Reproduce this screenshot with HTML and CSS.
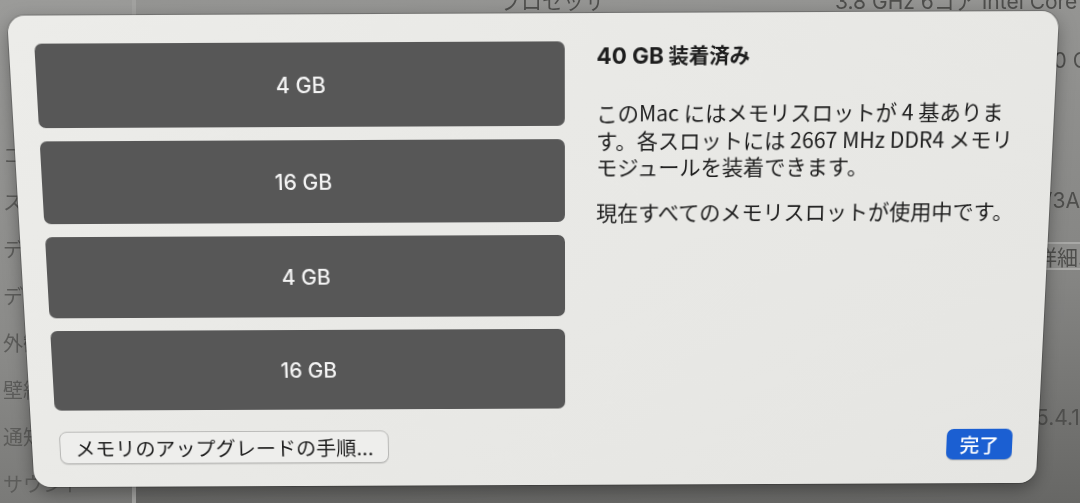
FILE: index.html
```html
<!DOCTYPE html>
<html lang="ja">
<head>
<meta charset="utf-8">
<title>メモリ</title>
<link rel="stylesheet" href="styles.css">
</head>
<body>
<div class="screen">
  <aside class="sidebar">
    <div class="side-item">コントロールセンター</div>
    <div class="side-item">スクリーンタイム</div>
    <div class="side-item">ディスプレイ</div>
    <div class="side-item">デスクトップとDock</div>
    <div class="side-item">外観</div>
    <div class="side-item">壁紙</div>
    <div class="side-item">通知</div>
    <div class="side-item">サウンド</div>
  </aside>
  <main class="info">
    <div class="info-row row-top"><span class="lbl">プロセッサ</span><span class="val">3.8 GHz 6コア Intel Core i5</span></div>
    <div class="info-row row-a"><span class="edge">40 GB 2667 MHz DDR4</span></div>
    <div class="info-row row-b"><span class="edge big">(</span></div>
    <div class="info-row row-c"><span class="edge">V3AB12CD</span></div>
    <div class="info-row row-d"><span class="edge detail">詳細...</span></div>
    <div class="info-row row-e"><span class="edge">5.4.1</span></div>
  </main>

  <section class="dialog">
    <div class="dialog-main">
      <div class="slots">
        <div class="slot">4 GB</div>
        <div class="slot">16 GB</div>
        <div class="slot">4 GB</div>
        <div class="slot">16 GB</div>
      </div>
      <div class="details">
        <h1 class="title"><span class="title-num">40 GB</span> 装着済み</h1>
        <p class="para">このMac にはメモリスロットが 4 基ありま<br>す。各スロットには 2667 MHz DDR4 メモリ<br>モジュールを装着できます。</p>
        <p class="para">現在すべてのメモリスロットが使用中です。</p>
      </div>
    </div>
    <div class="footer">
      <button class="btn btn-plain">メモリのアップグレードの手順...</button>
      <button class="btn btn-primary">完了</button>
    </div>
  </section>
</div>
</body>
</html>
```

FILE: styles.css
```css
html, body {
  margin: 0;
  padding: 0;
}

body {
  width: 1080px;
  height: 503px;
  overflow: hidden;
  background: #767674;
  font-family: Inter, "Noto Sans CJK JP", sans-serif;
}

.screen {
  position: relative;
  display: flex;
  width: 1080px;
  height: 503px;
  overflow: hidden;
}

/* ---------- backdrop window ---------- */
.sidebar {
  flex: none;
  width: 136px;
  background: linear-gradient(#9b9b99, #8a8a88 70%, #7a7a78);
  border-right: 4px solid #a2a2a0;
  display: flex;
  flex-direction: column;
  padding-top: 133px;
  box-sizing: border-box;
}

.side-item {
  height: 47px;
  line-height: 47px;
  padding-left: 3px;
  font-size: 20px;
  color: #5c5c5a;
  white-space: nowrap;
  filter: blur(0.5px);
}

.info {
  flex: 1;
  display: flex;
  flex-direction: column;
  background: linear-gradient(#959593, #858583 55%, #676765);
  color: #4e4e4c;
  font-size: 21px;
  white-space: nowrap;
  overflow: hidden;
}

.info-row {
  display: flex;
  align-items: center;
  filter: blur(0.5px);
}

.row-top {
  height: 20px;
  margin-top: -10px;
  padding-left: 364px;
}

.row-top .val {
  margin-left: 230px;
}

.row-a { height: 40px; margin-top: 30px; padding-left: 904px; }
.row-b { height: 40px; margin-top: 25px; padding-left: 906px; }
.row-c { height: 40px; margin-top: 35px; padding-left: 902px; }
.row-d {
  height: 24px;
  margin-top: 22px;
  padding-left: 900px;
  border-top: 2px solid #a8a8a6;
  border-bottom: 2px solid #a8a8a6;
  background: #8f8f8d;
}
.row-e { height: 40px; margin-top: 127px; padding-left: 900px; }

.big {
  font-size: 34px;
  font-weight: 300;
}

/* ---------- dialog ---------- */
.dialog {
  position: absolute;
  left: 21px;
  top: 18px;
  width: 1026px;
  height: 474px;
  box-sizing: border-box;
  padding: 27px 26px 24px 25px;
  display: flex;
  flex-direction: column;
  background: linear-gradient(135deg, #ecece9, #e5e5e2);
  border-radius: 17px;
  box-shadow: 0 0 0 1px rgba(0,0,0,0.18), 0 6px 18px rgba(0,0,0,0.35);
  transform: perspective(1000px) rotateX(-6deg) rotate(-0.25deg);
  color: #1d1d1d;
}

.dialog-main {
  display: flex;
  gap: 31px;
}

.slots {
  flex: none;
  width: 519px;
  display: flex;
  flex-direction: column;
  gap: 13px;
}

.slot {
  height: 82px;
  border-radius: 7px;
  background: #575757;
  color: #f4f4f4;
  font-size: 21px;
  font-weight: 500;
  display: flex;
  align-items: center;
  justify-content: center;
}

.details {
  flex: 1;
  white-space: nowrap;
  font-family: "Noto Sans CJK JP", sans-serif;
}

.title {
  margin: 1px 0 29px;
  font-size: 20px;
  font-weight: 700;
  line-height: 26px;
}

.title-num {
  font-family: Inter, "Noto Sans CJK JP", sans-serif;
  font-size: 22px;
}

.para {
  margin: 0 0 18px;
  font-size: 21px;
  line-height: 26.5px;
  font-weight: 400;
}

.footer {
  margin-top: auto;
  display: flex;
  align-items: center;
  justify-content: space-between;
}

.btn {
  font-family: Inter, "Noto Sans CJK JP", sans-serif;
  border: none;
  padding: 0;
  display: flex;
  align-items: center;
  justify-content: center;
}

.btn-plain {
  margin-left: 3px;
  width: 336px;
  height: 34px;
  border-radius: 8px;
  background: #eeeeec;
  border: 1px solid #b9b9b7;
  box-shadow: 0 1px 1px rgba(0,0,0,0.12);
  font-size: 20.5px;
  color: #1d1d1d;
}

.btn-primary {
  width: 67px;
  height: 32px;
  border-radius: 7px;
  background: #1b5fd2;
  color: #ffffff;
  font-size: 20px;
  font-weight: 500;
  box-shadow: 0 1px 1px rgba(0,0,0,0.2);
}
```
